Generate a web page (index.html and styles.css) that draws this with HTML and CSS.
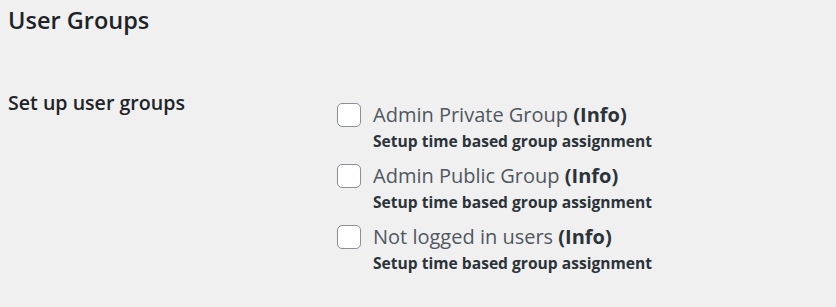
FILE: index.html
```html
<!DOCTYPE html>
<html lang="en">
<head>
  <meta charset="UTF-8" />
  <title>User Groups</title>
  <link rel="stylesheet" href="styles.css">
</head>
<body>
  <h2 class="title">User Groups</h2>
  <div class="form-row">
    <div class="row-label">Set up user groups</div>
    <div class="row-field">
      <div class="group">
        <label class="group-label">
          <span class="box"></span>
          <span>Admin Private Group <b>(Info)</b></span>
        </label>
        <div class="group-desc">Setup time based group assignment</div>
      </div>
      <div class="group">
        <label class="group-label">
          <span class="box"></span>
          <span>Admin Public Group <b>(Info)</b></span>
        </label>
        <div class="group-desc">Setup time based group assignment</div>
      </div>
      <div class="group">
        <label class="group-label">
          <span class="box"></span>
          <span>Not logged in users <b>(Info)</b></span>
        </label>
        <div class="group-desc">Setup time based group assignment</div>
      </div>
    </div>
  </div>
</body>
</html>
```

FILE: styles.css
```css
* {
  box-sizing: border-box;
}

body {
  margin: 0;
  padding: 0 8px;
  background: #f0f0f1;
  color: #1d2327;
  font-family: 'Open Sans', sans-serif;
}

.title {
  font-size: 23.5px;
  font-weight: 600;
  margin: 4px 0 0;
  line-height: 32px;
}

.form-row {
  display: flex;
  margin-top: 54px;
}

.row-label {
  width: 329px;
  font-size: 19.6px;
  font-weight: 600;
  line-height: 26px;
}

.row-field {
  display: flex;
  flex-direction: column;
  gap: 9px;
  padding-top: 9.5px;
}

.group-label {
  display: flex;
  align-items: center;
  gap: 12px;
  font-size: 20px;
  color: #50575e;
  line-height: 30px;
}

.group-label b {
  color: #2c3338;
  font-weight: 700;
}

.box {
  width: 24px;
  height: 24px;
  background: #fff;
  border: 1px solid #8c8f94;
  border-radius: 5px;
}

.group-desc {
  margin-left: 36px;
  font-size: 15.6px;
  font-weight: 700;
  color: #2c3338;
  line-height: 22px;
}
```
